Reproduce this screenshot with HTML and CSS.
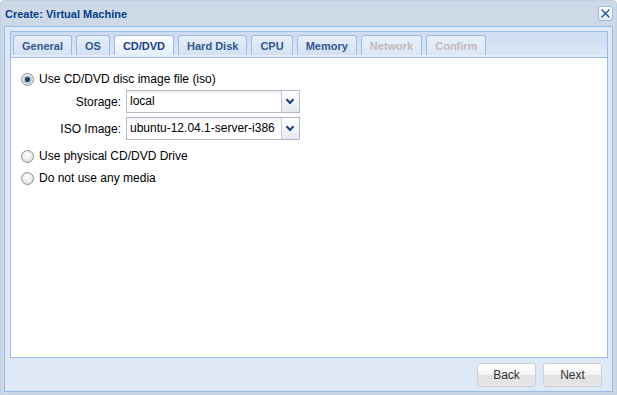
FILE: index.html
```html
<!DOCTYPE html>
<html lang="en">
<head>
    <meta charset="UTF-8">
    <title>Create: Virtual Machine</title>
    <link rel="stylesheet" href="styles.css">
</head>
<body>
    <div class="window">
        <div class="window-header">
            <span class="window-title">Create: Virtual Machine</span>
            <span class="tool-close">
                <svg width="11" height="11" viewBox="0 0 11 11">
                    <path d="M1.5 1.5 L9.5 9.5 M9.5 1.5 L1.5 9.5" stroke="#2a5597" stroke-width="1.4" fill="none"/>
                </svg>
            </span>
        </div>

        <div class="window-body">
            <div class="tab-panel">
                <div class="tab-bar">
                    <div class="tab">General</div>
                    <div class="tab">OS</div>
                    <div class="tab active">CD/DVD</div>
                    <div class="tab">Hard Disk</div>
                    <div class="tab">CPU</div>
                    <div class="tab">Memory</div>
                    <div class="tab disabled">Network</div>
                    <div class="tab disabled">Confirm</div>
                </div>
                <div class="tab-strip"></div>

                <div class="tab-body">
                    <label class="radio-row">
                        <span class="radio checked"></span>
                        Use CD/DVD disc image file (iso)
                    </label>

                    <div class="field-row">
                        <span class="field-label">Storage:</span>
                        <div class="combo">
                            <span class="combo-value">local</span>
                            <span class="combo-trigger"></span>
                        </div>
                    </div>
                    <div class="field-row">
                        <span class="field-label">ISO Image:</span>
                        <div class="combo">
                            <span class="combo-value">ubuntu-12.04.1-server-i386</span>
                            <span class="combo-trigger"></span>
                        </div>
                    </div>

                    <label class="radio-row spaced">
                        <span class="radio"></span>
                        Use physical CD/DVD Drive
                    </label>
                    <label class="radio-row">
                        <span class="radio"></span>
                        Do not use any media
                    </label>
                </div>
            </div>

            <div class="button-bar">
                <button class="btn">Back</button>
                <button class="btn">Next</button>
            </div>
        </div>
    </div>
</body>
</html>
```

FILE: styles.css
```css
* {
    margin: 0;
    padding: 0;
    box-sizing: border-box;
}

body {
    font-family: 'Liberation Sans', Arial, sans-serif;
    font-size: 12px;
    color: #000;
    background: #fff;
}

.window {
    width: 617px;
    height: 395px;
    display: flex;
    flex-direction: column;
    background: #ced9e7;
    border: 1px solid #c3d1e2;
    border-radius: 4px 4px 0 0;
    padding: 0 3px 2px;
}

.window-header {
    height: 25px;
    display: flex;
    align-items: center;
    justify-content: space-between;
    padding: 0 0 0 1px;
}

.window-title {
    font-weight: bold;
    font-size: 11px;
    color: #04408c;
}

.tool-close {
    width: 15px;
    height: 15px;
    margin-bottom: 1px;
    border: 1px solid #99bbe8;
    border-radius: 3px;
    background: linear-gradient(#ffffff, #e4ecf7);
    display: flex;
    align-items: center;
    justify-content: center;
}

.window-body {
    flex: 1;
    display: flex;
    flex-direction: column;
    background: #dfe8f6;
    border: 1px solid #99bbe8;
    padding: 4px 4px 0 5px;
}

/* tab panel */
.tab-panel {
    height: 327px;
    display: flex;
    flex-direction: column;
    border: 1px solid #99bbe8;
}

.tab-bar {
    display: flex;
    gap: 4px;
    padding: 3px 0 0 2px;
    height: 23px;
    background: linear-gradient(#cedcf1, #dae6f6);
}

.tab {
    height: 20px;
    padding: 0 8px;
    display: flex;
    align-items: center;
    font-size: 11px;
    font-weight: bold;
    color: #32578f;
    border: 1px solid #9dbae3;
    border-bottom: none;
    border-radius: 3px 3px 0 0;
    background: linear-gradient(#e6eefa, #d3e1f3);
}

.tab.active {
    color: #15428b;
    background: linear-gradient(#ffffff, #e4edf9);
    height: 21px;
}

.tab.disabled {
    color: #c4baba;
    background: linear-gradient(#e9f0fa, #dde7f5);
}

.tab-strip {
    height: 2px;
    background: #e4edf9;
    border-bottom: 1px solid #99bbe8;
    box-sizing: content-box;
}

.tab-body {
    flex: 1;
    background: #fff;
    padding: 10px 10px;
}

/* form */
.radio-row {
    height: 22px;
    display: flex;
    align-items: center;
    gap: 5px;
}

.radio-row.spaced {
    margin-top: 5px;
}

.radio {
    width: 13px;
    height: 13px;
    border-radius: 50%;
    border: 1px solid #8e8f8f;
    background: radial-gradient(circle at 50% 35%, #ffffff, #d5d6d8);
    display: flex;
    align-items: center;
    justify-content: center;
}

.radio.checked::after {
    content: "";
    width: 5px;
    height: 5px;
    border-radius: 50%;
    background: #2b3b4e;
    box-shadow: 0 0 0 1.5px #a9c4e4;
}

.field-row {
    display: flex;
    align-items: center;
    margin-bottom: 4px;
}

.field-label {
    width: 105px;
    padding-right: 5px;
    text-align: right;
}

.combo {
    width: 174px;
    height: 23px;
    display: flex;
    border: 1px solid #b5b8c8;
    background: linear-gradient(#f0f0f0, #ffffff 3px);
}

.combo-value {
    flex: 1;
    padding: 0 3px;
    line-height: 21px;
    font-size: 12px;
    white-space: nowrap;
    overflow: hidden;
}

.combo-trigger {
    width: 18px;
    border-left: 1px solid #c4c7d2;
    background: linear-gradient(#ffffff, #e5e9ef);
    position: relative;
}

.combo-trigger::after {
    content: "";
    position: absolute;
    left: 5px;
    top: 6px;
    width: 4px;
    height: 4px;
    border-right: 2px solid #1f3f75;
    border-bottom: 2px solid #1f3f75;
    transform: rotate(45deg);
}

/* footer buttons */
.button-bar {
    flex: 1;
    display: flex;
    justify-content: flex-end;
    align-items: center;
    gap: 7px;
    padding-right: 6px;
}

.btn {
    width: 59px;
    height: 24px;
    font-family: 'Liberation Sans', Arial, sans-serif;
    font-size: 12px;
    color: #333;
    border: 1px solid #d0d0d0;
    border-radius: 3px;
    background: linear-gradient(#ffffff, #f3f3f3 50%, #e2e2e2 51%, #e6e6e6);
}
```
